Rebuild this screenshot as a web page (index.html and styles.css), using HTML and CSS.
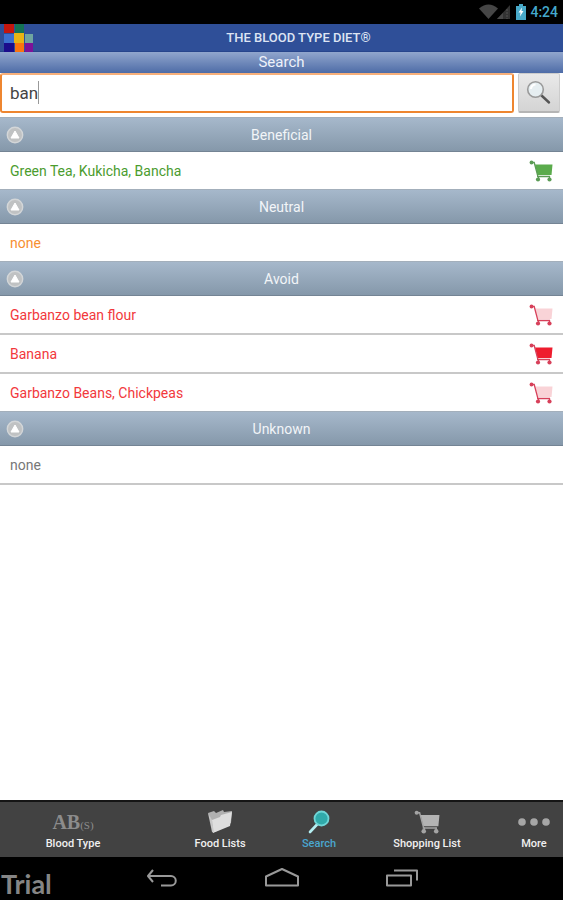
FILE: index.html
```html
<!DOCTYPE html>
<html lang="en">

<head>
    <meta charset="UTF-8">
    <meta name="viewport" content="width=device-width, initial-scale=1.0">
    <title>The Blood Type Diet - Search</title>
    <link rel="stylesheet" href="styles.css">
</head>

<body>
    <!-- shared icons -->
    <svg class="sprite" aria-hidden="true">
        <symbol id="cart" viewBox="0 0 24 22">
            <path class="cart-basket" d="M6 4.500h17.500l-1 10.500H8.500z" />
            <path class="cart-frame" d="M2.500 2.500h2.700L8.800 16.200M8 16.500h13" />
            <path class="cart-legs" d="M9.500 16v3M20.500 16v3" />
            <circle class="cart-dot" cx="2.500" cy="2.500" r="1.900" />
            <circle class="cart-dot" cx="9" cy="19.500" r="2.100" />
            <circle class="cart-dot" cx="20.500" cy="19.500" r="2.100" />
        </symbol>
        <symbol id="collapse" viewBox="0 0 18 18">
            <circle cx="9" cy="9" r="7.700" fill="#c0c2c3" stroke="#d3d6d8" stroke-width="1.400" />
            <path d="M9 5l4 7H5z" fill="#fff" stroke="#fff" stroke-width="1" stroke-linejoin="round" />
        </symbol>
    </svg>

    <div class="status-bar">
        <svg width="33" height="16" viewBox="0 0 33 16" aria-hidden="true">
            <path d="M0 4.500Q9.500-3.500 19 4.500L9.500 15z" fill="#464646" />
            <path d="M31 1v14H18z" fill="#333" />
            <path d="M24 9v6h-6z" fill="#484848" />
            <path d="M28 5v10" stroke="#555" stroke-dasharray="2 1" />
        </svg>
        <svg width="10" height="16" viewBox="0 0 10 16" aria-hidden="true">
            <path d="M3 0h4v2h3v14H0V2h3z" fill="#48a9c8" />
            <path d="M6 3.500L2.500 8.500h2L4 12.500l3.500-5.500h-2z" fill="#fff" />
        </svg>
        <span class="clock">4:24</span>
    </div>

    <header class="title-bar">
        <svg class="logo" width="30" height="28" viewBox="0 0 30 28" aria-hidden="true">
            <path fill="#c3160e" d="M0 0h10v9H0z" />
            <path fill="#147354" d="M11 0h9v9h-9z" />
            <path fill="#3c70d0" d="M0 10h10v9H0z" />
            <path fill="#e8b414" d="M10 9h10v10H10z" />
            <path fill="#6fa5a0" d="M21 10h8v9h-8z" />
            <path fill="#1b0c8c" d="M0 19h10v9H0z" />
            <path fill="#fb7410" d="M11 19h9v9h-9z" />
            <path fill="#7d1199" d="M21 19h8v9h-8z" />
        </svg>
        <h1>THE BLOOD TYPE DIET®</h1>
    </header>
    <h2 class="subtitle">Search</h2>

    <form class="search-form" onsubmit="return false">
        <div class="search-box">
            <input type="text" class="search-input" value="ban" aria-label="Search foods" autocomplete="off">
            <span class="caret"></span>
        </div>
        <button type="submit" class="search-button" aria-label="Search">
            <svg width="26" height="26" viewBox="0 0 26 26" aria-hidden="true">
                <path d="M15 15l8 7.500" stroke="#555" stroke-width="2.400" stroke-linecap="round" />
                <circle cx="9.500" cy="9.500" r="7.800" fill="#e6eef1" stroke="#9a9a9a" stroke-width="1.600" />
                <path d="M5 9a4.500 4.500 0 0 1 4.500-4.500" fill="none" stroke="#fff" stroke-width="2" />
            </svg>
        </button>
    </form>

    <main class="results">
        <section class="beneficial">
            <button type="button" class="group-header">
                <svg width="18" height="18"><use href="#collapse" /></svg>
                <span>Beneficial</span>
            </button>
            <div class="food">
                <span>Green Tea, Kukicha, Bancha</span>
                <svg class="cart in-list" width="24" height="22"><use href="#cart" /></svg>
            </div>
        </section>
        <section class="neutral">
            <button type="button" class="group-header">
                <svg width="18" height="18"><use href="#collapse" /></svg>
                <span>Neutral</span>
            </button>
            <div class="food"><span>none</span></div>
        </section>
        <section class="avoid">
            <button type="button" class="group-header">
                <svg width="18" height="18"><use href="#collapse" /></svg>
                <span>Avoid</span>
            </button>
            <div class="food">
                <span>Garbanzo bean flour</span>
                <svg class="cart" width="24" height="22"><use href="#cart" /></svg>
            </div>
            <div class="food">
                <span>Banana</span>
                <svg class="cart in-list" width="24" height="22"><use href="#cart" /></svg>
            </div>
            <div class="food">
                <span>Garbanzo Beans, Chickpeas</span>
                <svg class="cart" width="24" height="22"><use href="#cart" /></svg>
            </div>
        </section>
        <section class="unknown">
            <button type="button" class="group-header">
                <svg width="18" height="18"><use href="#collapse" /></svg>
                <span>Unknown</span>
            </button>
            <div class="food"><span>none</span></div>
        </section>
    </main>

    <nav class="tabs">
        <button type="button" class="tab">
            <span class="tab-icon blood">AB<small>(S)</small></span>
            <span>Blood Type</span>
        </button>
        <button type="button" class="tab">
            <svg class="tab-icon" width="26" height="24" viewBox="0 0 26 24" aria-hidden="true">
                <path d="M1 3l6-2 2 2 7-3 1 2 8-1-1 12-16 9z" fill="#b0b0b0" />
                <path d="M5 10l8-3 1-2 11-3-2 14-17 7z" fill="#dedede" />
                <path d="M1 3l4 7 2 13-2-1z" fill="#c8c8c8" />
            </svg>
            <span>Food Lists</span>
        </button>
        <button type="button" class="tab active">
            <svg class="tab-icon" width="24" height="24" viewBox="0 0 24 24" aria-hidden="true">
                <path d="M10.500 14L3 22" stroke="#b5eef2" stroke-width="2.600" stroke-linecap="round" />
                <circle cx="14.500" cy="8.500" r="7" fill="#30aaaa" stroke="#6fd5d6" stroke-width="1.800" />
            </svg>
            <span>Search</span>
        </button>
        <button type="button" class="tab">
            <svg class="tab-icon cart in-list" width="26" height="24"><use href="#cart" /></svg>
            <span>Shopping List</span>
        </button>
        <button type="button" class="tab">
            <svg class="tab-icon" width="32" height="24" viewBox="0 0 32 24" aria-hidden="true" fill="#a6a6a6">
                <circle cx="4" cy="12" r="3.800" />
                <circle cx="16" cy="12" r="3.800" />
                <circle cx="28" cy="12" r="3.800" />
            </svg>
            <span>More</span>
        </button>
    </nav>

    <div class="system-bar">
        <button type="button" aria-label="Back">
            <svg width="34" height="22" viewBox="0 0 34 22">
                <path d="M8 2L3 8l5 6M3 8h23a4.700 4.700 0 0 1 0 9.500H16" />
            </svg>
        </button>
        <button type="button" aria-label="Home">
            <svg width="34" height="22" viewBox="0 0 34 22">
                <path d="M1 8.500L17 1l16 7.500V17.500H1z" />
            </svg>
        </button>
        <button type="button" aria-label="Recent apps">
            <svg width="34" height="22" viewBox="0 0 34 22">
                <path d="M2 7.500h24v10H2zM9 2.500h23v10" />
            </svg>
        </button>
        <span class="trial">Trial</span>
    </div>
</body>

</html>
```
FILE: styles.css
```css
* {
    box-sizing: border-box;
}

body {
    margin: 0;
    min-height: 100vh;
    display: flex;
    flex-direction: column;
    background: #fff;
    font-family: Roboto, "Liberation Sans", sans-serif;
    font-size: 14px;
}

button {
    font: inherit;
    border: 0;
    padding: 0;
    background: none;
}

.sprite {
    display: none;
}

.status-bar {
    height: 24px;
    padding: 0 5px;
    display: flex;
    align-items: center;
    justify-content: flex-end;
    gap: 4px;
    background: #000;
}

.clock {
    color: #45a9cc;
    font-size: 14px;
    font-weight: 500;
}

.title-bar {
    height: 28px;
    padding: 0 0 0 4px;
    display: grid;
    grid-template-columns: 30px 1fr;
    background: #2f4f98;
    border-bottom: 1px solid #27458c;
}

.title-bar h1 {
    margin: 0;
    color: #dde4f3;
    font-size: 13px;
    font-weight: 500;
    line-height: 28px;
    text-align: center;
}

.subtitle {
    margin: 0;
    color: #eef2fa;
    background: linear-gradient(#91a6cd, #4e6ca7);
    font-size: 15px;
    font-weight: 400;
    line-height: 21px;
    text-align: center;
}

.search-form {
    display: flex;
    gap: 4px;
    padding: 0 3px 4px 0;
}

.search-box {
    position: relative;
    flex: 1;
}

.search-input {
    display: block;
    width: 100%;
    height: 40px;
    padding: 0 8px;
    border: 2px solid #ee8630;
    border-top-color: #f8b07a;
    border-radius: 3px;
    outline: 0;
    color: #444;
    background: #fff;
    font: inherit;
    font-size: 17px;
}

/* text cursor after the typed letters */
.caret {
    position: absolute;
    left: 38px;
    top: 8px;
    width: 1px;
    height: 23px;
    background: #999;
}

.search-button {
    width: 42px;
    height: 40px;
    display: flex;
    align-items: center;
    justify-content: center;
    background: linear-gradient(#e9e9e9, #d4d4d4);
    border: 1px solid #ccc;
    border-bottom: 2px solid #b5b5b5;
    border-radius: 2px;
}

.results {
    flex: 1;
}

.group-header {
    width: 100%;
    height: 35px;
    padding: 0 6px;
    display: grid;
    grid-template-columns: 18px 1fr 18px;
    align-items: center;
    color: #f2f5f8;
    background: linear-gradient(#a6b8cb, #8598aa);
    border-top: 1px solid #a3afbb;
    border-bottom: 1px solid #748494;
}

.food {
    height: 37px;
    padding: 0 10px;
    display: flex;
    align-items: center;
    justify-content: space-between;
}

.food + .food {
    height: 39px;
    border-top: 2px solid #c8c8c8;
}

.beneficial {
    color: #4b9c2e;
}

.neutral {
    color: #f78f31;
}

.avoid {
    color: #f2383c;
}

.unknown {
    color: #777;
    border-bottom: 2px solid #c8c8c8;
}

.cart {
    --basket: #f9d3d7;
    --frame: #d7405a;
}

.cart.in-list {
    --basket: #ee1c2e;
}

.beneficial .cart {
    --basket: #5bab4c;
    --frame: #5b9c55;
}

.cart-basket {
    fill: var(--basket);
}

.cart-frame,
.cart-legs {
    fill: none;
    stroke: var(--frame);
    stroke-width: 1.3;
}

.cart-dot {
    fill: var(--frame);
}

.tabs {
    height: 57px;
    padding: 8px 5px 0 0;
    display: grid;
    grid-template-columns: 146fr 148fr 50fr 166fr 48fr;
    background: #424242;
    border-top: 2px solid #151515;
}

.tab {
    display: flex;
    flex-direction: column;
    align-items: center;
    color: #f0f0f0;
    font-size: 11px;
    font-weight: 500;
    line-height: 20px;
    white-space: nowrap;
}

.tab.active {
    color: #4aa6cf;
}

.tab-icon {
    height: 24px;
}

.tab .cart {
    --basket: #b4b4b4;
    --frame: #a4a4a4;
}

.blood {
    color: #8c8c8c;
    font-family: "Liberation Serif", serif;
    font-size: 20px;
    font-weight: 700;
    line-height: 24px;
}

.blood small {
    font-size: 11px;
    font-weight: 400;
}

.system-bar {
    position: relative;
    height: 43px;
    display: flex;
    align-items: center;
    justify-content: center;
    gap: 86px;
    background: #000;
}

.system-bar button {
    height: 22px;
}

.system-bar path {
    fill: none;
    stroke: #999;
    stroke-width: 2;
    stroke-linejoin: round;
}

/* watermark over the system bar */
.trial {
    position: absolute;
    left: 0;
    bottom: 0;
    padding-left: 1px;
    color: #858585;
    font-family: Lato, sans-serif;
    font-size: 27px;
    font-weight: 700;
    line-height: 32px;
}
```
